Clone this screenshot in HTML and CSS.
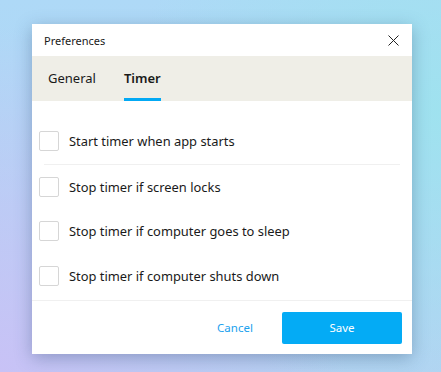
FILE: index.html
```html
<!DOCTYPE html>
<html lang="en">
  <head>
    <meta charset="UTF-8" />
    <title>Preferences</title>
    <link rel="stylesheet" href="styles.css">
  </head>
  <body>
    <div class="dialog">
      <div class="title-bar">
        <span class="title">Preferences</span>
        <button class="close-button" aria-label="Close">
          <svg width="11" height="11" viewBox="0 0 11 11">
            <path d="M0.5 0.5 L10.5 10.5 M10.5 0.5 L0.5 10.5" stroke="#222" stroke-width="1" fill="none" />
          </svg>
        </button>
      </div>

      <div class="tabs">
        <div class="tab">General</div>
        <div class="tab active">Timer</div>
      </div>

      <div class="content">
        <label class="option">
          <span class="checkbox"></span>
          <span>Start timer when app starts</span>
        </label>
        <div class="divider"></div>
        <label class="option">
          <span class="checkbox"></span>
          <span>Stop timer if screen locks</span>
        </label>
        <label class="option">
          <span class="checkbox"></span>
          <span>Stop timer if computer goes to sleep</span>
        </label>
        <label class="option">
          <span class="checkbox"></span>
          <span>Stop timer if computer shuts down</span>
        </label>
      </div>

      <div class="footer">
        <button class="cancel-button">Cancel</button>
        <button class="save-button">Save</button>
      </div>
    </div>
  </body>
</html>
```

FILE: styles.css
```css
/* Page background */
body {
  margin: 0;
  width: 441px;
  height: 372px;
  overflow: hidden;
  font-family: "Noto Sans", "Open Sans", Arial, sans-serif;
  color: #1a1a1a;
  background:
    radial-gradient(circle at 0% 100%, #c8c2f6 0%, rgba(200, 194, 246, 0) 60%),
    radial-gradient(circle at 100% 30%, #9fe2ef 0%, rgba(159, 226, 239, 0) 60%),
    linear-gradient(180deg, #aed9f7 0%, #b4d2f2 100%);
  padding: 24px 0 0 32px;
  box-sizing: border-box;
}

.dialog {
  width: 380px;
  height: 330px;
  background-color: #fff;
  box-shadow: 0 4px 16px rgba(40, 70, 110, 0.35);
  display: flex;
  flex-direction: column;
}

/* Title bar */
.title-bar {
  height: 32px;
  display: flex;
  align-items: center;
  justify-content: space-between;
  padding: 0 13px 0 12px;
}

.title {
  font-size: 11px;
}

.close-button {
  border: none;
  background: none;
  padding: 0;
  width: 11px;
  height: 11px;
  display: flex;
}

/* Tabs */
.tabs {
  height: 45px;
  background-color: #efeee7;
  display: flex;
  padding-left: 16px;
  gap: 28px;
}

.tab {
  font-size: 13px;
  display: flex;
  align-items: center;
  padding-top: 2px;
  border-bottom: 3px solid transparent;
  box-sizing: border-box;
}

.tab.active {
  font-weight: 600;
  border-bottom-color: #03a9f4;
}

/* Options */
.content {
  flex: 1;
  padding: 18px 12px 0 7px;
  border-bottom: 1px solid #f0f0f0;
}

.option {
  height: 44.5px;
  display: flex;
  align-items: center;
  gap: 10px;
  font-size: 12.9px;
}

.checkbox {
  width: 18px;
  height: 18px;
  border: 1px solid #d6d6d6;
  border-radius: 2px;
}

.divider {
  height: 1px;
  margin-left: 5px;
  background-color: #f0f0f0;
}

/* Footer buttons */
.footer {
  height: 53px;
  display: flex;
  align-items: center;
  justify-content: flex-end;
  padding-right: 10px;
}

.footer button {
  height: 32px;
  border: none;
  font-family: inherit;
  font-size: 11.5px;
  cursor: pointer;
}

.cancel-button {
  width: 94px;
  background: none;
  color: #1ba1ee;
}

.save-button {
  width: 120px;
  background-color: #04abf5;
  color: #fff;
  border-radius: 2px;
}
```
